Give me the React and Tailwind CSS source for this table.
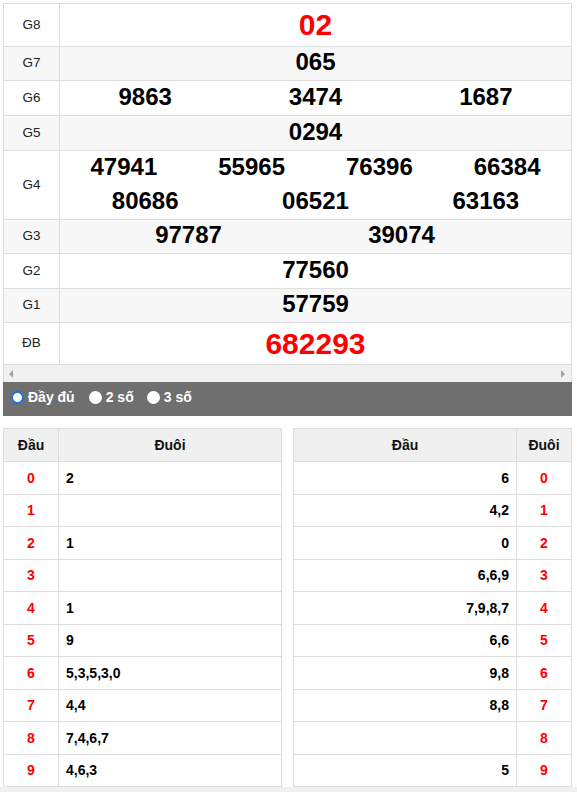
import React from "react";

const font = { fontFamily: '"Liberation Sans", Arial, sans-serif' };

function Num({ children, className = "" }) {
  return <span className={"text-[24px] font-bold text-black leading-none " + className}>{children}</span>;
}

function Row({ label, h, gray, children }) {
  return (
    <div className={"flex border-b border-[#dddddd] " + h + (gray ? " bg-[#f7f7f7]" : " bg-white")}>
      <div className="w-[56px] shrink-0 border-r border-[#dddddd] flex items-center justify-center text-[13.5px] text-[#222]">
        {label}
      </div>
      <div className="flex-1 min-w-0">{children}</div>
    </div>
  );
}

function Cols({ items, h = "h-full" }) {
  return (
    <div className={"flex items-center " + h}>
      {items.map((n, i) => (
        <div key={i} className="flex-1 text-center">
          <Num>{n}</Num>
        </div>
      ))}
    </div>
  );
}

const left = [
  ["0", "2"],
  ["1", ""],
  ["2", "1"],
  ["3", ""],
  ["4", "1"],
  ["5", "9"],
  ["6", "5,3,5,3,0"],
  ["7", "4,4"],
  ["8", "7,4,6,7"],
  ["9", "4,6,3"],
];
const right = [
  ["6", "0"],
  ["4,2", "1"],
  ["0", "2"],
  ["6,6,9", "3"],
  ["7,9,8,7", "4"],
  ["6,6", "5"],
  ["9,8", "6"],
  ["8,8", "7"],
  ["", "8"],
  ["5", "9"],
];
const rowH = ["h-[33px]", "h-[32px]"];

function Radio({ checked }) {
  return checked ? (
    <span className="inline-block w-[13px] h-[13px] rounded-full border-2 border-[#1a73e8] bg-white" />
  ) : (
    <span className="inline-block w-[13px] h-[13px] rounded-full bg-white" />
  );
}

export default function App() {
  return (
    <div style={font} className="w-[577px] h-[792px] bg-white overflow-hidden">
      <div className="pt-[3px] pl-[3px]">
        <div className="w-[569px] border-t border-l border-r border-[#dddddd]">
          <Row label="G8" h="h-[43px]">
            <div className="h-full flex items-center justify-center">
              <span className="text-[30px] font-bold text-[#ff0000] leading-none">02</span>
            </div>
          </Row>
          <Row label="G7" h="h-[34px]" gray>
            <Cols items={["065"]} />
          </Row>
          <Row label="G6" h="h-[35px]">
            <Cols items={["9863", "3474", "1687"]} />
          </Row>
          <Row label="G5" h="h-[35px]" gray>
            <Cols items={["0294"]} />
          </Row>
          <Row label="G4" h="h-[69px]">
            <div className="flex flex-col h-full">
              <Cols items={["47941", "55965", "76396", "66384"]} h="h-[34px]" />
              <Cols items={["80686", "06521", "63163"]} h="h-[34px]" />
            </div>
          </Row>
          <Row label="G3" h="h-[34px]" gray>
            <div className="h-full flex items-center pl-[22px]">
              <div className="w-[213px] text-center"><Num>97787</Num></div>
              <div className="w-[213px] text-center"><Num>39074</Num></div>
            </div>
          </Row>
          <Row label="G2" h="h-[35px]">
            <Cols items={["77560"]} />
          </Row>
          <Row label="G1" h="h-[34px]" gray>
            <Cols items={["57759"]} />
          </Row>
          <Row label="ĐB" h="h-[42px]">
            <div className="h-full flex items-center justify-center">
              <span className="text-[30px] font-bold text-[#ff0000] leading-none">682293</span>
            </div>
          </Row>
          <div className="h-[17px] bg-[#f1f1f1] flex items-center justify-between px-[5px]">
            <svg width="5" height="8" viewBox="0 0 5 8"><path d="M4 0 L0 4 L4 8 Z" fill="#a3a3a3" /></svg>
            <svg width="5" height="8" viewBox="0 0 5 8"><path d="M0 0 L4 4 L0 8 Z" fill="#a3a3a3" /></svg>
          </div>
        </div>
        <div className="w-[569px] h-[34px] bg-[#6f6f6f] flex items-center pl-[8px] pb-[3px] text-white text-[14px] font-bold">
          <label className="flex items-center gap-[4px] mr-[14px]"><Radio checked /><span>Đầy đủ</span></label>
          <label className="flex items-center gap-[4px] mr-[13px]"><Radio /><span>2 số</span></label>
          <label className="flex items-center gap-[4px]"><Radio /><span>3 số</span></label>
        </div>
        <div className="flex gap-[11px] mt-[12px] w-[569px]">
          <div className="w-[279px] border-t border-l border-r border-[#dddddd] text-[14px] font-bold">
            <div className="flex h-[33px] border-b border-[#dddddd] bg-[#f0f0f0] text-[#111]">
              <div className="w-[55px] border-r border-[#dddddd] flex items-center justify-center">Đầu</div>
              <div className="flex-1 flex items-center justify-center">Đuôi</div>
            </div>
            {left.map(([d, t], i) => (
              <div key={i} className={"flex border-b border-[#dddddd] " + rowH[i % 2]}>
                <div className="w-[55px] border-r border-[#dddddd] flex items-center justify-center text-[#ff0000]">{d}</div>
                <div className="flex-1 flex items-center pl-[7px] text-black">{t}</div>
              </div>
            ))}
          </div>
          <div className="w-[279px] border-t border-l border-r border-[#dddddd] text-[14px] font-bold">
            <div className="flex h-[33px] border-b border-[#dddddd] bg-[#f0f0f0] text-[#111]">
              <div className="flex-1 flex items-center justify-center">Đầu</div>
              <div className="w-[55px] border-l border-[#dddddd] flex items-center justify-center">Đuôi</div>
            </div>
            {right.map(([t, d], i) => (
              <div key={i} className={"flex border-b border-[#dddddd] " + rowH[i % 2]}>
                <div className="flex-1 flex items-center justify-end pr-[7px] text-black">{t}</div>
                <div className="w-[55px] border-l border-[#dddddd] flex items-center justify-center text-[#ff0000]">{d}</div>
              </div>
            ))}
          </div>
        </div>
      </div>
      <div className="h-[10px] bg-[#f0f0f0]" />
    </div>
  );
}
